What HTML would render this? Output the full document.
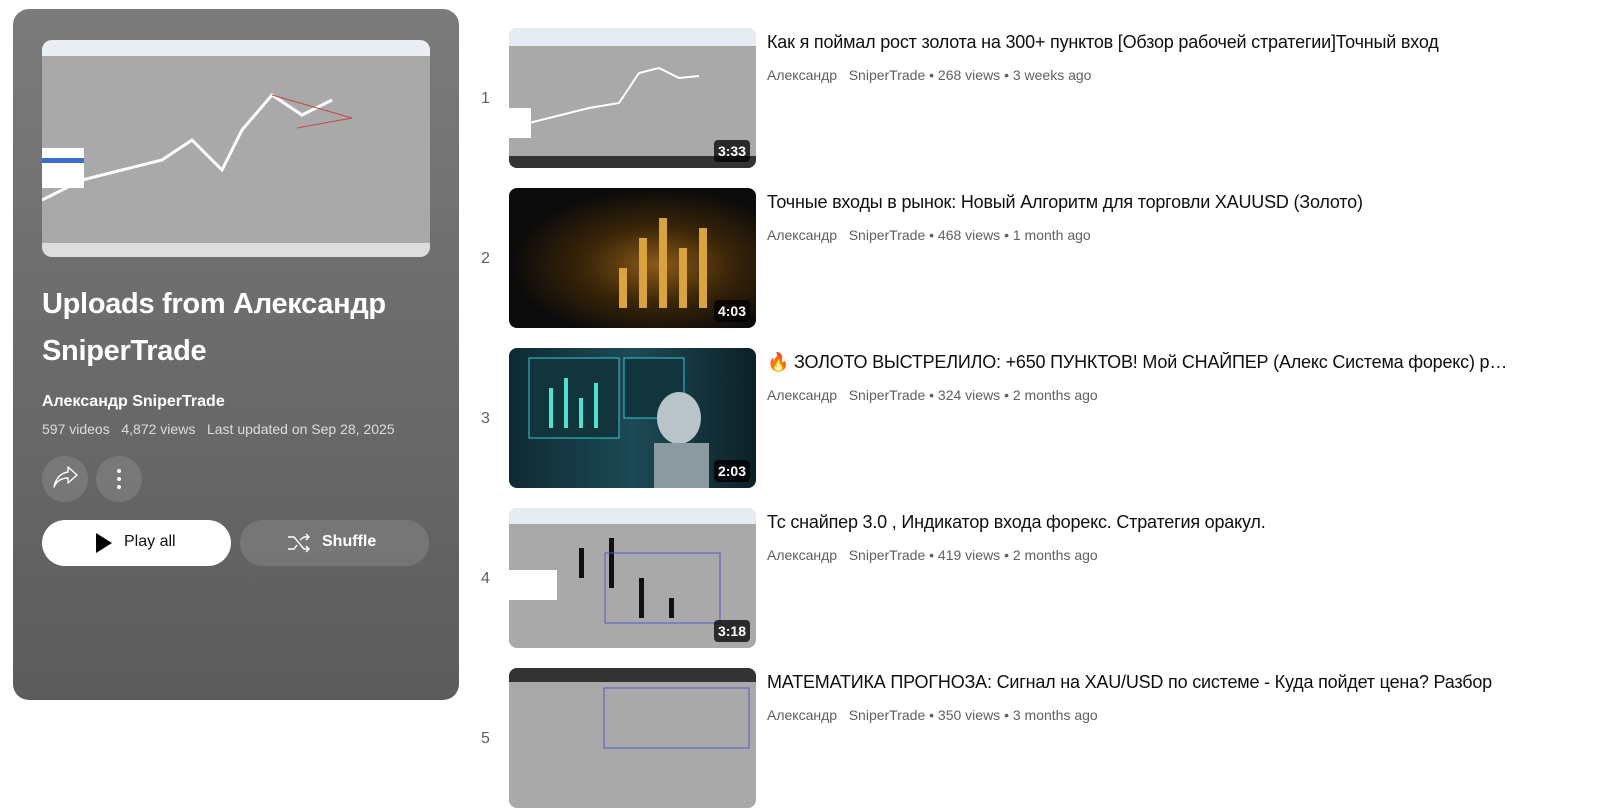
<!DOCTYPE html>
<html><head><meta charset="utf-8"><style>
*{margin:0;padding:0;box-sizing:border-box}
body{width:1600px;height:737px;overflow:hidden;background:#fff;font-family:"Liberation Sans",sans-serif;position:relative}
.panel{position:absolute;left:13px;top:9px;width:446px;height:691px;border-radius:16px;background:linear-gradient(#7b7b7b 0%,#6e6e6e 40%,#5c5c5c 100%);overflow:hidden}
.pthumb{position:absolute;left:29px;top:31px;width:388px;height:217px;border-radius:10px;background:#a9a9a9;overflow:hidden}
.t{position:absolute;color:#fff}
.row{position:absolute;left:0;width:1600px;height:140px}
.idx{position:absolute;left:481px;top:62px;font-size:16px;color:#606060}
.th{position:absolute;left:509px;top:0;width:247px;height:140px;border-radius:8px;overflow:hidden}
.dur{position:absolute;right:6px;bottom:6px;background:rgba(0,0,0,.75);color:#fff;font-size:14px;font-weight:bold;padding:3px 4px;border-radius:4px}
.ti{position:absolute;left:767px;top:4px;font-size:18px;color:#0f0f0f;white-space:nowrap;width:745px;overflow:hidden;text-overflow:ellipsis;letter-spacing:-0.2px}
.me{position:absolute;left:767px;top:39px;font-size:14px;color:#606060}
.chart{position:absolute;left:0;top:0}
</style></head><body>
<div class="panel">
 <div class="pthumb">
  <div style="position:absolute;left:0;top:0;right:0;height:16px;background:#e8eef4"></div>
  <div style="position:absolute;left:0;bottom:0;right:0;height:14px;background:#ddd"></div>
  <svg class="chart" width="388" height="217"><polyline points="0,160 40,140 80,130 120,120 150,100 180,130 200,90 230,55 260,75 290,60" fill="none" stroke="#fff" stroke-width="3"/><polyline points="230,55 310,78 255,88" fill="none" stroke="#c44" stroke-width="1"/><rect x="0" y="108" width="42" height="40" fill="#fff"/><rect x="0" y="118" width="42" height="5" fill="#3a6fd0"/></svg>
 </div>
 <div class="t" style="left:29px;top:272px;font-size:29px;font-weight:bold;line-height:47px;letter-spacing:-0.3px">Uploads from Александр<br>SniperTrade</div>
 <div class="t" style="left:29px;top:384px;font-size:16px;font-weight:bold">Александр SniperTrade</div>
 <div class="t" style="left:29px;top:412px;font-size:14px;color:#ddd">597 videos&nbsp;&nbsp;&nbsp;4,872 views&nbsp;&nbsp;&nbsp;Last updated on Sep 28, 2025</div>
 <div style="position:absolute;left:29px;top:447px;width:46px;height:46px;border-radius:50%;background:rgba(255,255,255,.12)"><svg width="46" height="46"><path d="M12 31c3-7 8-9 14-9v5l9-8-9-8v5c-7 1-12 6-14 15z" fill="none" stroke="#fff" stroke-width="1.4" stroke-linejoin="round"/></svg></div>
 <div style="position:absolute;left:83px;top:447px;width:46px;height:46px;border-radius:50%;background:rgba(255,255,255,.12)"><svg width="46" height="46"><circle cx="23" cy="15" r="2" fill="#fff"/><circle cx="23" cy="23" r="2" fill="#fff"/><circle cx="23" cy="31" r="2" fill="#fff"/></svg></div>
 <div style="position:absolute;left:29px;top:511px;width:189px;height:46px;border-radius:23px;background:#fff"><svg style="position:absolute;left:52px;top:12px" width="20" height="22"><path d="M2 1l16 10L2 21z" fill="#000"/></svg><span style="position:absolute;left:82px;top:13px;font-size:16px;color:#0f0f0f">Play all</span></div>
 <div style="position:absolute;left:227px;top:511px;width:189px;height:46px;border-radius:23px;background:rgba(255,255,255,.12)"><svg style="position:absolute;left:46px;top:11px" width="26" height="24"><path d="M2 6h6l10 12h5M2 18h6l3-4M14 9l4-3h5M20 3l3 3-3 3M20 15l3 3-3 3" fill="none" stroke="#fff" stroke-width="1.4"/></svg><span style="position:absolute;left:82px;top:13px;font-size:16px;font-weight:bold;color:#fff">Shuffle</span></div>
</div>

<div class="row" style="top:28px"><div class="idx">1</div>
 <div class="th" style="background:#a9a9a9"><div style="position:absolute;left:0;top:0;right:0;height:18px;background:#e6ecf2"></div><div style="position:absolute;left:0;bottom:0;right:0;height:12px;background:#333"></div><svg class="chart" width="247" height="140"><polyline points="0,100 40,90 80,80 110,75 130,45 150,40 170,50 190,48" fill="none" stroke="#fff" stroke-width="2"/><rect x="0" y="80" width="22" height="30" fill="#fff"/></svg><span class="dur">3:33</span></div>
 <div class="ti">Как я поймал рост золота на 300+ пунктов [Обзор рабочей стратегии]Точный вход</div>
 <div class="me">Александр&nbsp;&nbsp;&nbsp;SniperTrade • 268 views • 3 weeks ago</div></div>

<div class="row" style="top:188px"><div class="idx">2</div>
 <div class="th" style="background:radial-gradient(ellipse at 60% 55%,#8a5a18 0%,#3a2508 35%,#0b0b0b 70%)"><svg class="chart" width="247" height="140"><g fill="#d9a440"><rect x="130" y="50" width="8" height="70"/><rect x="150" y="30" width="8" height="90"/><rect x="170" y="60" width="8" height="60"/><rect x="190" y="40" width="8" height="80"/><rect x="110" y="80" width="8" height="40"/></g></svg><span class="dur">4:03</span></div>
 <div class="ti">Точные входы в рынок: Новый Алгоритм для торговли XAUUSD (Золото)</div>
 <div class="me">Александр&nbsp;&nbsp;&nbsp;SniperTrade • 468 views • 1 month ago</div></div>

<div class="row" style="top:348px"><div class="idx">3</div>
 <div class="th" style="background:linear-gradient(90deg,#0e2a33,#1d4a55 50%,#0d2028)"><svg class="chart" width="247" height="140"><rect x="20" y="10" width="90" height="80" fill="#12353d" stroke="#3cc" stroke-width="1"/><rect x="115" y="10" width="60" height="60" fill="#12353d" stroke="#3cc"/><g fill="#4ee0d0"><rect x="40" y="40" width="4" height="40"/><rect x="55" y="30" width="4" height="50"/><rect x="70" y="50" width="4" height="30"/><rect x="85" y="35" width="4" height="45"/></g><ellipse cx="170" cy="70" rx="22" ry="26" fill="#b8c4c8"/><rect x="145" y="95" width="55" height="45" fill="#8a9aa0"/></svg><span class="dur">2:03</span></div>
 <div class="ti">🔥 ЗОЛОТО ВЫСТРЕЛИЛО: +650 ПУНКТОВ! Мой СНАЙПЕР (Алекс Система форекс) рабочая</div>
 <div class="me">Александр&nbsp;&nbsp;&nbsp;SniperTrade • 324 views • 2 months ago</div></div>

<div class="row" style="top:508px"><div class="idx">4</div>
 <div class="th" style="background:#a9a9a9"><div style="position:absolute;left:0;top:0;right:0;height:16px;background:#e6ecf2"></div><svg class="chart" width="247" height="140"><rect x="0" y="62" width="48" height="30" fill="#fff"/><g fill="#111"><rect x="70" y="40" width="5" height="30"/><rect x="100" y="30" width="5" height="50"/><rect x="130" y="70" width="5" height="40"/><rect x="160" y="90" width="5" height="20"/></g><rect x="96" y="45" width="115" height="70" fill="none" stroke="#55c" stroke-width="1"/></svg><span class="dur">3:18</span></div>
 <div class="ti">Тс снайпер 3.0 , Индикатор входа форекс. Стратегия оракул.</div>
 <div class="me">Александр&nbsp;&nbsp;&nbsp;SniperTrade • 419 views • 2 months ago</div></div>

<div class="row" style="top:668px"><div class="idx">5</div>
 <div class="th" style="background:#a9a9a9"><div style="position:absolute;left:0;top:0;right:0;height:14px;background:#333"></div><svg class="chart" width="247" height="140"><rect x="95" y="20" width="145" height="60" fill="none" stroke="#55c"/></svg></div>
 <div class="ti">МАТЕМАТИКА ПРОГНОЗА: Сигнал на XAU/USD по системе - Куда пойдет цена? Разбор</div>
 <div class="me">Александр&nbsp;&nbsp;&nbsp;SniperTrade • 350 views • 3 months ago</div></div>
</body></html>
